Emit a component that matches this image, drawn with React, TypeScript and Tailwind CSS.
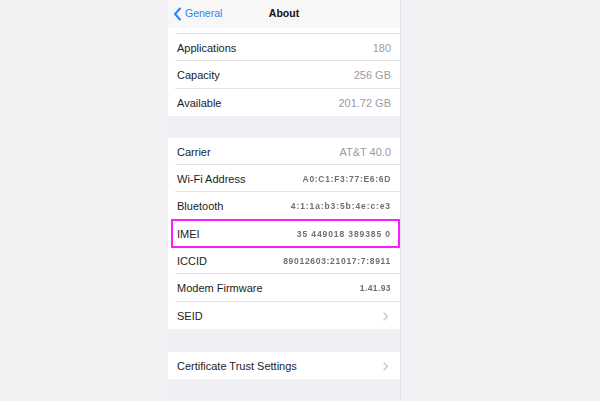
import React from "react";

const font = { fontFamily: '"Liberation Sans", Arial, sans-serif' };

function Chevron() {
  return (
    <svg width="6" height="9" viewBox="0 0 6 9" className="mr-[2px]">
      <path d="M1 1 L4.5 4.5 L1 8" fill="none" stroke="#c4c4c9" strokeWidth="1.3" strokeLinecap="round" strokeLinejoin="round" />
    </svg>
  );
}

type Row = { label: string; value?: string; blur?: boolean; chevron?: boolean; track?: string };

function Section({ rows, top }: { rows: Row[]; top?: boolean }) {
  return (
    <div className="bg-white flex flex-col">
      {top && (
        <div className="h-[6px] pl-[7px]">
          <div className="h-full border-b border-[#e3e3e6]" />
        </div>
      )}
      {rows.map((r, i) => (
        <div key={r.label} className="h-[27.3px] pl-[7px]">
          <div
            className={
              "h-full flex items-center justify-between pl-[2px] pr-[9px] pt-[2px] " +
              (i < rows.length - 1 ? "border-b border-[#e3e3e6]" : "")
            }
          >
            <span className="text-[11px] text-[#1c1c1e]">{r.label}</span>
            {r.chevron ? (
              <Chevron />
            ) : r.blur ? (
              <span
                className="inline-block text-[8.5px] text-[#6f6f74] [filter:blur(0.7px)] font-bold"
                style={{ letterSpacing: r.track }}
              >
                {r.value}
              </span>
            ) : (
              <span className="text-[11px] text-[#9b9ba0]">{r.value}</span>
            )}
          </div>
        </div>
      ))}
    </div>
  );
}

export default function App() {
  return (
    <div className="w-[600px] h-[401px] bg-[#f2f2f4] flex pl-[168px] overflow-hidden" style={font}>
      <div className="w-[233px] h-full bg-[#efeff4] flex flex-col relative border-r border-[#e6e6ea]">
        <div className="h-[28px] bg-[#f7f7f8] relative flex items-center justify-center shrink-0">
          <div className="absolute left-[5px] top-0 h-full flex items-center gap-[3px]">
            <svg width="9" height="14" viewBox="0 0 9 14">
              <path d="M7 1.5 L2 7 L7 12.5" fill="none" stroke="#2a84f7" strokeWidth="2" strokeLinecap="round" strokeLinejoin="round" />
            </svg>
            <span className="text-[10.5px] text-[#2a84f7]">General</span>
          </div>
          <span className="text-[10.5px] font-bold text-[#111]">About</span>
        </div>
        <Section
          top
          rows={[
            { label: "Applications", value: "180" },
            { label: "Capacity", value: "256 GB" },
            { label: "Available", value: "201.72 GB" },
          ]}
        />
        <div className="h-[22px] shrink-0" />
        <Section
          rows={[
            { label: "Carrier", value: "AT&T 40.0" },
            { label: "Wi-Fi Address", value: "A0:C1:F3:77:E6:6D", blur: true, track: "0.7px" },
            { label: "Bluetooth", value: "4:1:1a:b3:5b:4e:c:e3", blur: true, track: "0.9px" },
            { label: "IMEI", value: "35 449018 389385 0", blur: true, track: "0.9px" },
            { label: "ICCID", value: "89012603:21017:7:8911", blur: true, track: "0.7px" },
            { label: "Modem Firmware", value: "1.41.93", blur: true, track: "0.4px" },
            { label: "SEID", chevron: true },
          ]}
        />
        <div className="h-[23px] shrink-0" />
        <Section rows={[{ label: "Certificate Trust Settings", chevron: true }]} />
        <div className="absolute left-[3px] top-[219px] w-[229px] h-[29px] border-2 border-[#ff1aff]" />
      </div>
    </div>
  );
}
